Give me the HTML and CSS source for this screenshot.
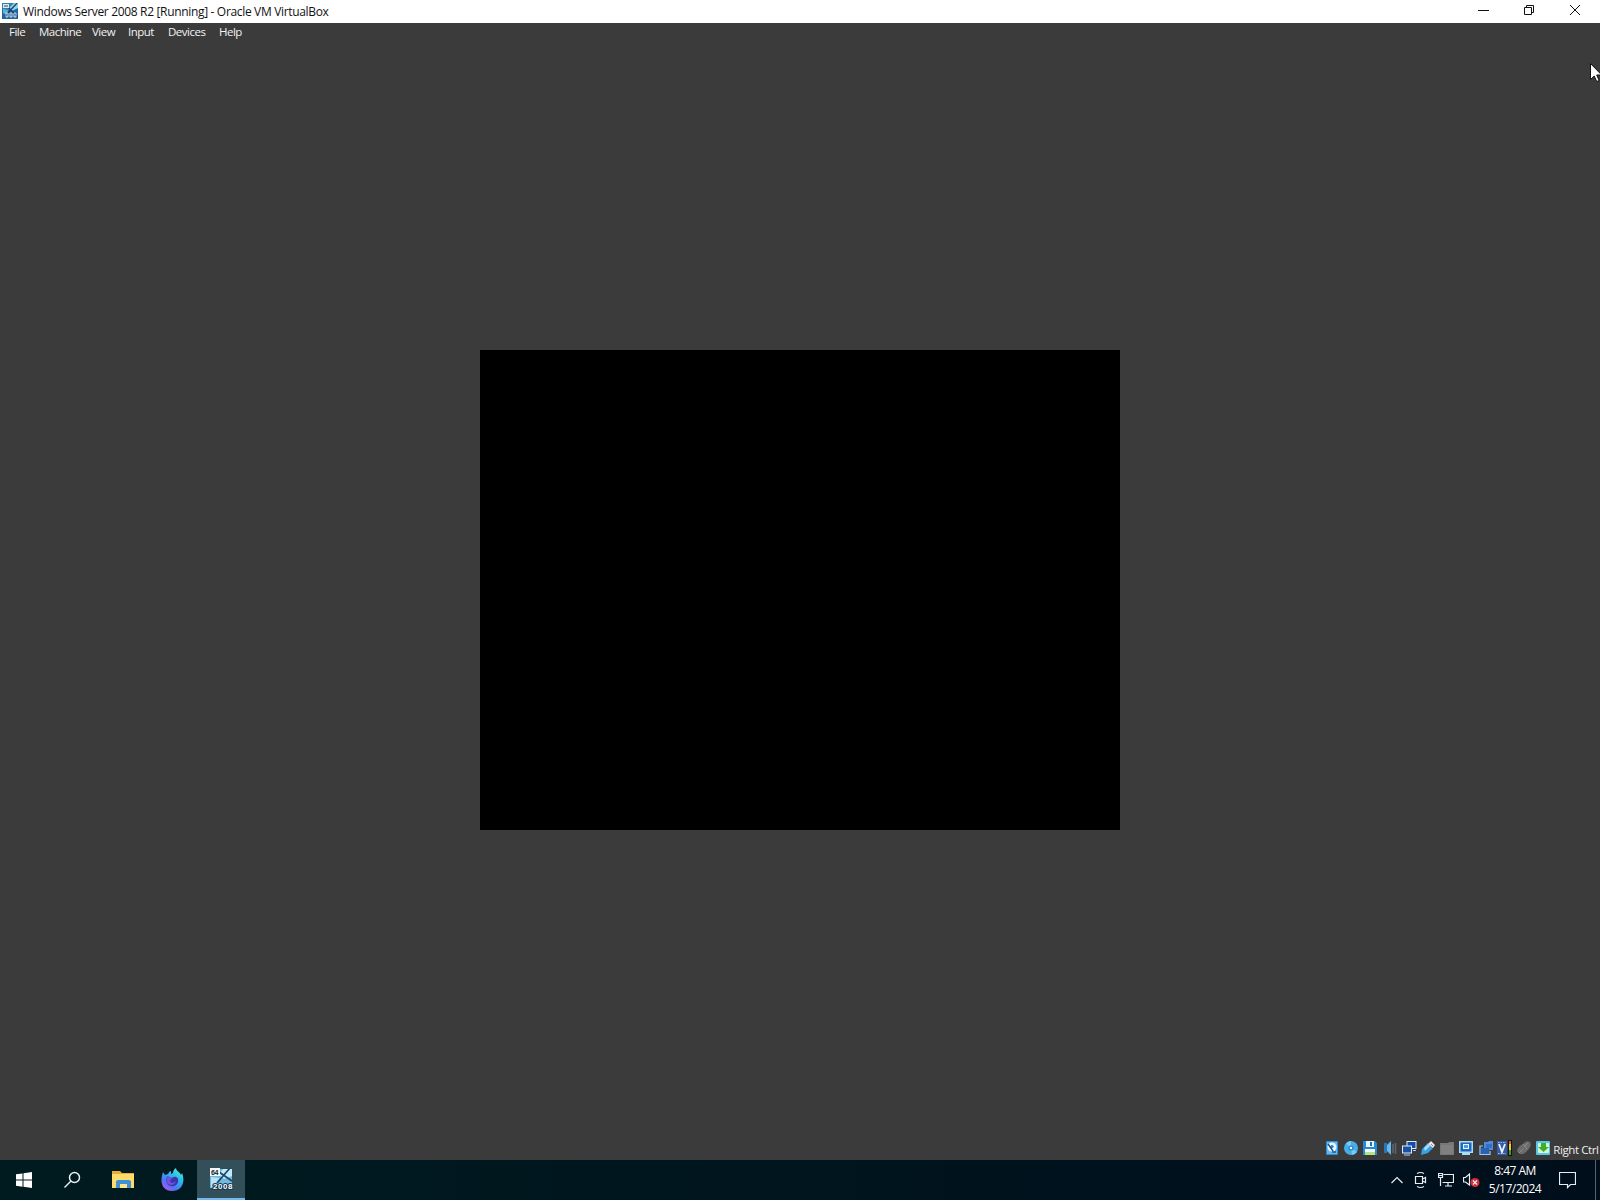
FILE: index.html
```html
<!DOCTYPE html>
<html lang="en">
<head>
    <meta charset="UTF-8">
    <title>Windows Server 2008 R2 [Running] - Oracle VM VirtualBox</title>
    <link rel="stylesheet" href="styles.css">
</head>
<body>
    <!-- VM window -->
    <div class="window">
        <header class="titlebar">
            <svg class="app-icon" width="16" height="16" viewBox="0 0 16 16">
                <rect width="16" height="16" fill="#2d7fb4"/>
                <path d="M0 7L8 8L16 3V16H0z" fill="#2268a0"/>
                <path d="M7 5L12 0H16V5L10 8z" fill="#8ed0ef"/>
                <path d="M1 6L6 7L5 12L1 10z" fill="#5bb5dc"/>
                <path d="M6 4L16 14M15 0L3 13" stroke="#173e66" stroke-width="1.2"/>
                <rect x="1" y="1" width="6" height="4" fill="#dce9ef"/>
                <path d="M2 3h4" stroke="#345" stroke-width="1"/>
                <path d="M4 10v4h2v-4zm4 0v4h2v-4zm4 0v4h2v-4z" fill="none" stroke="#e8f4fa" stroke-width=".8"/>
            </svg>
            <h1 class="title">Windows Server 2008 R2 [Running] - Oracle VM VirtualBox</h1>
            <div class="controls">
                <svg width="46" height="23" viewBox="0 0 46 23"><path d="M18 10.500h11"/></svg>
                <svg width="46" height="23" viewBox="0 0 46 23"><path d="M18.500 7.500h7v7h-7zM20.500 7.500v-2h7v7h-2"/></svg>
                <svg width="46" height="23" viewBox="0 0 46 23"><path d="M18 5l10 10M28 5L18 15"/></svg>
            </div>
        </header>
        <nav class="menubar">
            <span class="m-file">File</span>
            <span class="m-machine">Machine</span>
            <span class="m-view">View</span>
            <span class="m-input">Input</span>
            <span class="m-devices">Devices</span>
            <span class="m-help">Help</span>
        </nav>
        <main class="viewport">
            <div class="guest-screen"></div>
        </main>
        <div class="statusbar">
            <!-- hard disk -->
            <svg width="16" height="16" viewBox="0 0 16 16">
                <rect x="2" y="1" width="12" height="14" rx="1" fill="#2b8fdc"/>
                <rect x="3" y="2" width="10" height="12" fill="#64b8f0"/>
                <circle cx="8" cy="7" r="4.500" fill="#e9f6ff"/>
                <circle cx="8" cy="6.500" r="1.600" fill="#2b78bd"/>
                <path d="M4 4l5 7" stroke="#17477e" stroke-width="1.300"/>
                <path d="M8 12h4" stroke="#17477e" stroke-width="1.300"/>
            </svg>
            <!-- optical disc -->
            <svg width="16" height="16" viewBox="0 0 16 16">
                <circle cx="8" cy="8" r="7" fill="#49aee8"/>
                <path d="M8 8L3 3.500A7 7 0 0 1 8 1zM8 8l6 4a7 7 0 0 1-5 3z" fill="#74ccf4"/>
                <circle cx="8" cy="8" r="2.600" fill="#2384c8"/>
                <circle cx="8" cy="8" r="1.300" fill="#e6f8ff"/>
            </svg>
            <!-- floppy -->
            <svg width="16" height="16" viewBox="0 0 16 16">
                <path d="M1 1h12l2 2v12H1z" fill="#2389d8"/>
                <rect x="4" y="1" width="8" height="6" fill="#e6f4fb"/>
                <rect x="8" y="2" width="2" height="4" fill="#2171b6"/>
                <rect x="3" y="9" width="10" height="6" fill="#f0fafa"/>
                <rect x="3" y="12" width="10" height="3" fill="#b8e27c"/>
            </svg>
            <!-- audio -->
            <svg width="16" height="16" viewBox="0 0 16 16">
                <path d="M2 3h3v10H2z" fill="#2677ba"/>
                <path d="M5 5l4-4v14l-4-4z" fill="#67b8ed"/>
                <path d="M11 4v9M13.500 3v11" stroke="#5d646d" stroke-width="1.600"/>
            </svg>
            <!-- network -->
            <svg width="16" height="16" viewBox="0 0 16 16">
                <rect x="6" y="1.500" width="9" height="7" fill="#174ca8" stroke="#dcecff"/>
                <rect x="1.500" y="6" width="9" height="7" fill="#1c4fa8" stroke="#dcecff"/>
                <path d="M3 15h6M12 10.500h3" stroke="#a9d1fa" stroke-width="1.200"/>
            </svg>
            <!-- usb -->
            <svg width="16" height="16" viewBox="0 0 16 16">
                <path d="M1 15L2 9L8 3L13 8L8 13z" fill="#3aa2e4"/>
                <path d="M4 8L8 4L10 6L5 11z" fill="#9ee0ff"/>
                <path d="M8 4L11 1L15 5L13 8z" fill="#f4dfe5"/>
                <path d="M11 4l2 2" stroke="#a27b8e" stroke-width="1"/>
            </svg>
            <!-- shared folders -->
            <svg width="16" height="16" viewBox="0 0 16 16">
                <path d="M1 3h8l1-1h5v13H1z" fill="#777"/>
                <path d="M2 5h12v9H2z" fill="#808080"/>
            </svg>
            <!-- display -->
            <svg width="16" height="16" viewBox="0 0 16 16">
                <path d="M1 1h14v12h-3v2H4v-2H1z" fill="#a7ddfb"/>
                <rect x="2.500" y="2.500" width="11" height="9" fill="#1f66bf"/>
                <rect x="5.500" y="4.500" width="5" height="4" fill="#4c9bdd" stroke="#e8f7ff"/>
            </svg>
            <!-- recording -->
            <svg width="16" height="16" viewBox="0 0 16 16">
                <path d="M6 2h4l1-1h4v9H6z" fill="#4c8be1"/>
                <path d="M8 5h6M8 7h6" stroke="#1e55ad"/>
                <path d="M5 6H2v8.500h10V11" fill="none" stroke="#9bc9f8" stroke-width="1.200"/>
                <rect x="3" y="8" width="8" height="6" fill="#2863b2"/>
            </svg>
            <!-- cpu features -->
            <svg class="cpu" width="16" height="16" viewBox="0 0 16 16">
                <rect x="1" y="1" width="10" height="14" fill="#315aae"/>
                <path d="M2 2.500h8M2 13.500h8" stroke="#9bb7ea" stroke-dasharray="1.500 1"/>
                <path d="M3 4l3 8 3-8" fill="none" stroke="#edf4ff" stroke-width="1.800"/>
                <rect x="12" y="0" width="4" height="16" fill="#131313"/>
                <rect x="13" y="1" width="2" height="5" fill="#e0641d"/>
                <rect x="13" y="4" width="2" height="6" fill="#efcf20"/>
                <rect x="13" y="10" width="2" height="5" fill="#3d9d24"/>
            </svg>
            <!-- mouse integration -->
            <svg width="16" height="16" viewBox="0 0 16 16">
                <path d="M1 11Q2 6 7 4Q10 0 14 2Q16 6 12 10Q8 15 4 14Q2 13 1 11" fill="#6c6c6c"/>
                <path d="M7 4l4 5M9 6l3-3M3 13l4-4" stroke="#8e8e8e"/>
            </svg>
            <!-- keyboard capture -->
            <svg width="16" height="16" viewBox="0 0 16 16">
                <rect x="1" y="1" width="14" height="14" rx="1" fill="#56c6ef"/>
                <rect x="3" y="3" width="11" height="10" rx="1" fill="#d8f6ce"/>
                <path d="M6 3h5v4h3l-5.500 5L3 7h3z" fill="#3fae28"/>
            </svg>
            <span class="host-key">Right Ctrl</span>
        </div>
    </div>

    <!-- host taskbar -->
    <footer class="taskbar">
        <div class="task start">
            <svg width="16" height="16" viewBox="0 0 16 16"><path d="M0 2.300L6.500 1.400V7.500H0zM7.500 1.200L16 0V7.500H7.500zM0 8.500h6.500v6.200L0 13.800zM7.500 8.500H16V16l-8.500-1.200z" fill="#fff"/></svg>
        </div>
        <div class="task search">
            <svg width="18" height="18" viewBox="0 0 18 18" fill="none" stroke="#e8f0f2" stroke-width="1.500"><circle cx="11.500" cy="6.500" r="5"/><path d="M8 10L1.500 16.500"/></svg>
        </div>
        <div class="task">
            <svg width="22" height="20" viewBox="0 0 22 20">
                <path d="M0 1h8l2 2h12v15H0z" fill="#e9ad35"/>
                <path d="M0 4h22v14H0z" fill="#ffda6c"/>
                <path d="M4 18v-7l2-1h11l2 1v7h-4v-4H8v4z" fill="#3e91d3"/>
                <path d="M8 14h7v4H8z" fill="#ffe28a"/>
            </svg>
        </div>
        <div class="task">
            <svg width="24" height="24" viewBox="0 0 24 24">
                <defs>
                    <linearGradient id="fox" x1="0.900" y1="0" x2="0.200" y2="1">
                        <stop offset="0" stop-color="#60f1c8"/>
                        <stop offset=".4" stop-color="#28b8ee"/>
                        <stop offset=".75" stop-color="#5272f4"/>
                        <stop offset="1" stop-color="#c050ed"/>
                    </linearGradient>
                </defs>
                <path d="M3 4l2 3 3-1c1-2 2-3 3-3v3l2-1c0-2 1-4 3-5 0 3 4 4 5 7l1-2c4 10-1 18-10 18C3 23-1 15 3 4z" fill="url(#fox)"/>
                <path d="M7 8l5 2c4-3 7 0 6 4-1 5-9 6-11 1-1-2-1-4 0-7z" fill="#3c35ab"/>
                <path d="M7 8l5 2-2 3c1 3 4 2 6 0-1 5-8 5-9 1z" fill="#7550df"/>
            </svg>
        </div>
        <div class="task active">
            <svg width="24" height="24" viewBox="0 0 24 24">
                <rect x="1" y="2" width="22" height="19" fill="#72b9df"/>
                <path d="M10 8L14 2h9v7l-8 3z" fill="#c2ebfa"/>
                <path d="M2 10l8 1-2 9H2z" fill="#b7e4f7"/>
                <path d="M10 5l13 9M21 1L8 16" stroke="#1d4968" stroke-width="1.800"/>
                <rect x="1" y="1" width="10" height="8" fill="#f3f7f8"/>
                <text class="bits" x="2" y="7.500">64</text>
                <text class="version" x="4" y="22" textLength="19">2008</text>
            </svg>
        </div>

        <div class="tray">
            <svg width="12" height="8" viewBox="0 0 12 8"><path d="M.5 7L6 1.500 11.500 7"/></svg>
            <svg width="14" height="18" viewBox="0 0 14 18"><path d="M1.500 5.500h7v7h-7zM8.500 8l3-1.500v5l-3-1.500M3 2.500q3.500-2 7 0M3 15.500q3.500 2 7 0"/></svg>
            <svg width="16" height="14" viewBox="0 0 16 14"><path d="M5.500 1.500h10v8h-11M10 9.500v3.500M7 13h7M.5.500h4v4h-4zM2.500 4.500v8.500M.5 2.500h4"/></svg>
            <svg width="17" height="14" viewBox="0 0 17 14"><path d="M.5 4.500h2L6.500 1v11L2.500 9h-2z"/><circle class="mute" cx="12" cy="9.500" r="4.500"/><path d="M10 7.500l4 4M14 7.500l-4 4"/></svg>
        </div>
        <div class="clock">
            <span class="time">8:47 AM</span>
            <span class="date">5/17/2024</span>
        </div>
        <svg class="action-center" width="17" height="17" viewBox="0 0 17 17"><path d="M.5.500h16v12h-5L8.500 15.500v-3h-8z"/></svg>
        <div class="show-desktop"></div>
    </footer>

    <svg class="cursor" width="12" height="20" viewBox="0 0 12 20"><path d="M.5.500v16l3.700-3.500 2.500 5.500 2.500-1-2.500-5.500h5z"/></svg>
</body>
</html>
```
FILE: styles.css
```css
* {
    box-sizing: border-box;
    margin: 0;
    padding: 0;
}
body {
    width: 1600px;
    height: 1200px;
    overflow: hidden;
    position: relative;
    display: flex;
    flex-direction: column;
    background: #3b3b3b;
    font-family: "Open Sans", "Noto Sans", sans-serif;
    font-size: 11.5px;
    letter-spacing: -0.5px;
}
svg {
    display: block;
    flex: none;
}

/* window */
.window {
    height: 1160px;
    display: flex;
    flex-direction: column;
}
.titlebar {
    height: 23px;
    padding-left: 2px;
    display: flex;
    background: #fff;
    color: #111;
}
.app-icon {
    margin-top: 3px;
}
.title {
    margin-left: 5px;
    font-size: 12px;
    font-weight: 400;
    line-height: 23px;
    letter-spacing: -0.33px;
    white-space: nowrap;
}
.controls {
    display: flex;
    margin-left: auto;
    margin-right: 2px;
}
.controls path {
    fill: none;
    stroke: #111;
}
.menubar {
    height: 21px;
    padding-left: 9px;
    display: flex;
    color: #f2f2f2;
    line-height: 18px;
    white-space: nowrap;
}
.m-file {
    width: 30px;
}
.m-machine {
    width: 53px;
}
.m-view {
    width: 36px;
}
.m-input {
    width: 40px;
}
.m-devices {
    width: 51px;
}
.viewport {
    flex: 1;
    display: flex;
    justify-content: center;
    padding-top: 306px;
}
.guest-screen {
    width: 640px;
    height: 480px;
    background: #000;
}
.statusbar {
    height: 23px;
    padding-left: 1324px;
    padding-bottom: 1px;
    display: flex;
    align-items: center;
    gap: 3.2px;
    color: #eee;
}
.cpu {
    margin-left: -1px;
    margin-right: 1px;
}
.host-key {
    margin-left: -1px;
    padding-top: 3px;
    letter-spacing: -0.4px;
    white-space: nowrap;
}

/* taskbar */
.taskbar {
    height: 40px;
    display: flex;
    align-items: center;
    background: linear-gradient(90deg, #001b20 0%, #00161e 40%, #000e1c 100%);
    color: #fff;
}
.task {
    width: 49px;
    height: 40px;
    display: flex;
    align-items: center;
    justify-content: center;
}
.start {
    width: 48px;
}
.search {
    width: 50px;
    padding-right: 3px;
}
.task.active {
    margin-left: 1px;
    width: 48px;
    background: #33505a;
    border-bottom: 2px solid #76b9ed;
}
.bits {
    font: bold 7px "Liberation Sans", sans-serif;
    fill: #123;
}
.version {
    font: bold 8px "Liberation Sans", sans-serif;
    fill: #fff;
    stroke: #123a52;
    stroke-width: 2px;
    paint-order: stroke;
}
.tray {
    display: flex;
    align-items: center;
    gap: 9.5px;
    margin-left: auto;
}
.tray svg:nth-child(2) {
    margin-left: 2px;
}
.tray path,
.action-center path {
    fill: none;
    stroke: #e8edf0;
    stroke-width: 1.2;
}
.tray .mute {
    fill: #d92c3b;
}
.clock {
    width: 52px;
    margin-left: 9px;
    padding-bottom: 1px;
    display: flex;
    flex-direction: column;
    align-items: center;
    font-size: 12px;
    line-height: 18px;
    letter-spacing: -0.5px;
    white-space: nowrap;
}
.action-center {
    margin-left: 18px;
}
.show-desktop {
    width: 5px;
    height: 40px;
    margin-left: 19px;
    border-left: 1px solid #59636c;
}

.cursor {
    position: absolute;
    left: 1590px;
    top: 63px;
}
.cursor path {
    fill: #fff;
    stroke: #111;
}
```
